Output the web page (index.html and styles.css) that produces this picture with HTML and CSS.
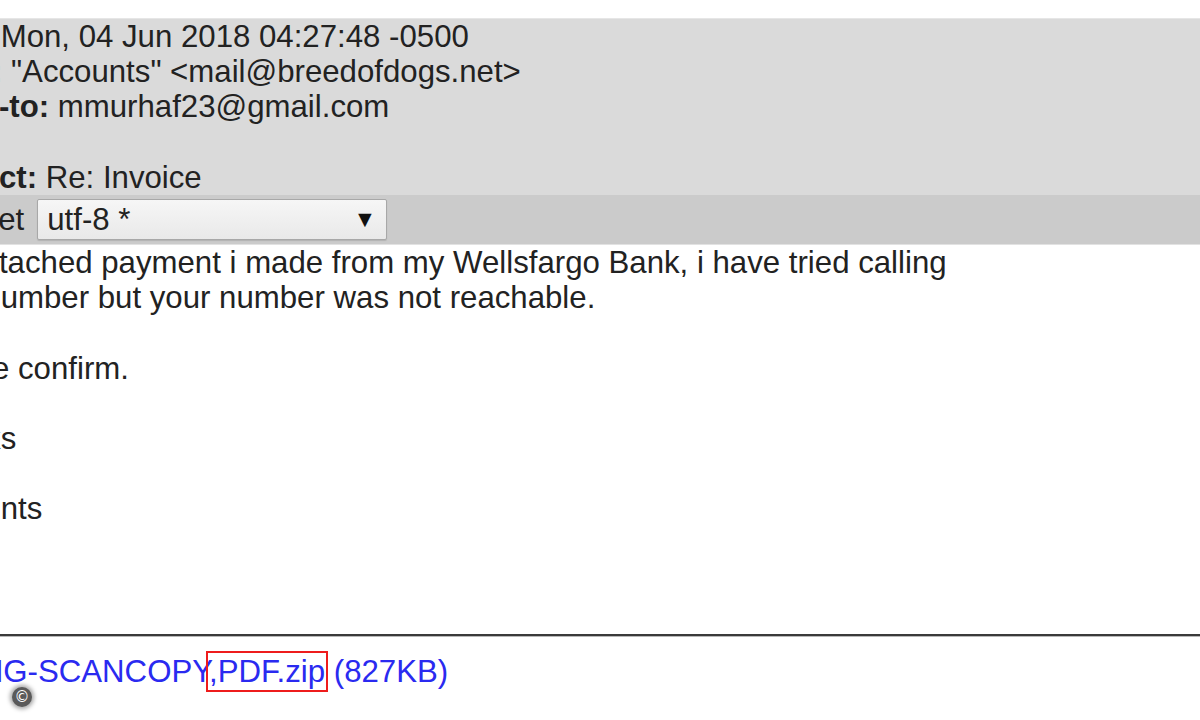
FILE: index.html
```html
<!DOCTYPE html>
<html lang="en">
<head>
    <meta charset="UTF-8">
    <title>Re: Invoice</title>
    <link rel="stylesheet" href="styles.css">
</head>
<body>
    <main class="message">
        <section class="msg-headers">
            <div class="msg-line"><b>Date:</b> Mon, 04 Jun 2018 04:27:48 -0500</div>
            <div class="msg-line"><b>From:</b> "Accounts" &lt;mail@breedofdogs.net&gt;</div>
            <div class="msg-line"><b>Reply-to:</b> mmurhaf23@gmail.com</div>
            <div class="msg-line">&nbsp;</div>
            <div class="msg-line"><b>Subject:</b> Re: Invoice</div>
        </section>

        <div class="charset-row">
            <span class="charset-label">Charset</span>
            <div class="charset-select">
                <span>utf-8 *</span>
                <span class="charset-arrow">&#9660;</span>
            </div>
        </div>

        <div class="msg-body">
            <div class="msg-line">see attached payment i made from my Wellsfargo Bank, i have tried calling</div>
            <div class="msg-line">your number but your number was not reachable.</div>
            <div class="msg-line">&nbsp;</div>
            <div class="msg-line">Please confirm.</div>
            <div class="msg-line">&nbsp;</div>
            <div class="msg-line">Thanks</div>
            <div class="msg-line">&nbsp;</div>
            <div class="msg-line">Accounts</div>
            <div class="msg-line">&nbsp;</div>
            <div class="msg-line">&nbsp;</div>
            <div class="msg-line">&nbsp;</div>
        </div>

        <hr class="attach-rule">

        <div class="attachments">
            <a href="#" class="attach-link">PNG-SCANCOPY<span class="attach-mark">,PDF.zip</span></a>
            <span class="attach-size">(827KB)</span>
        </div>
    </main>

    <span class="copy-badge">&copy;</span>
</body>
</html>
```

FILE: styles.css
```css
/* --- Geral --- */
html, body { margin: 0; height: 100%; }
body {
    background: #ffffff;
    color: #222222;
    font-family: "Liberation Sans", Arial, sans-serif;
    font-size: 31.2px;
    line-height: 35.2px;
    overflow: hidden;
    position: relative;
}

/* the page is shown scrolled/cropped, the left labels fall off screen */
.message { margin-left: -86px; padding-top: 18px; }
.msg-line { white-space: nowrap; height: 35.2px; }
.msg-line b { font-weight: bold; }

/* --- Cabeçalhos --- */
.msg-headers {
    background: #dadada;
    border-top: 1px solid #e6e6e6;
}

/* --- Charset --- */
.charset-row {
    background: #cbcbcb;
    display: flex;
    align-items: center;
    gap: 13px;
    padding: 4px 0 4px 1px;
    border-bottom: 1px solid #e2e2e2;
}
.charset-label { white-space: nowrap; }
.charset-select {
    width: 350px;
    height: 41px;
    border: 1px solid #a8a8a8;
    border-radius: 2px;
    background: linear-gradient(#f6f6f6, #e9e9e9);
    box-shadow: 0 1px 1px rgba(0,0,0,0.12);
    display: flex;
    align-items: center;
    justify-content: space-between;
    padding: 0 0 0 9px;
    box-sizing: border-box;
    line-height: 1;
}
.charset-arrow { font-size: 23px; color: #111; margin-right: 10px; }

/* --- Anexos --- */
.attach-rule {
    margin: 2px 0 0;
    border: 0;
    border-top: 2px solid #3a3a3a;
    border-bottom: 1px solid #b8b8b8;
    height: 0;
}
.attachments { padding: 17px 0 0 46px; white-space: nowrap; }
.attach-link, .attach-size { color: #2a2af0; text-decoration: none; }
.attach-mark { outline: 2px solid #ee1c1c; outline-offset: 1px; }

/* --- Selo --- */
.copy-badge {
    position: absolute;
    left: 12px;
    top: 687px;
    width: 20px;
    height: 20px;
    border-radius: 50%;
    background: #5a5a5a;
    color: #ffffff;
    font-family: "DejaVu Sans", sans-serif;
    font-size: 15px;
    line-height: 20px;
    text-align: center;
    box-shadow: 0 0 4px 2px rgba(0,0,0,0.35);
}
```
